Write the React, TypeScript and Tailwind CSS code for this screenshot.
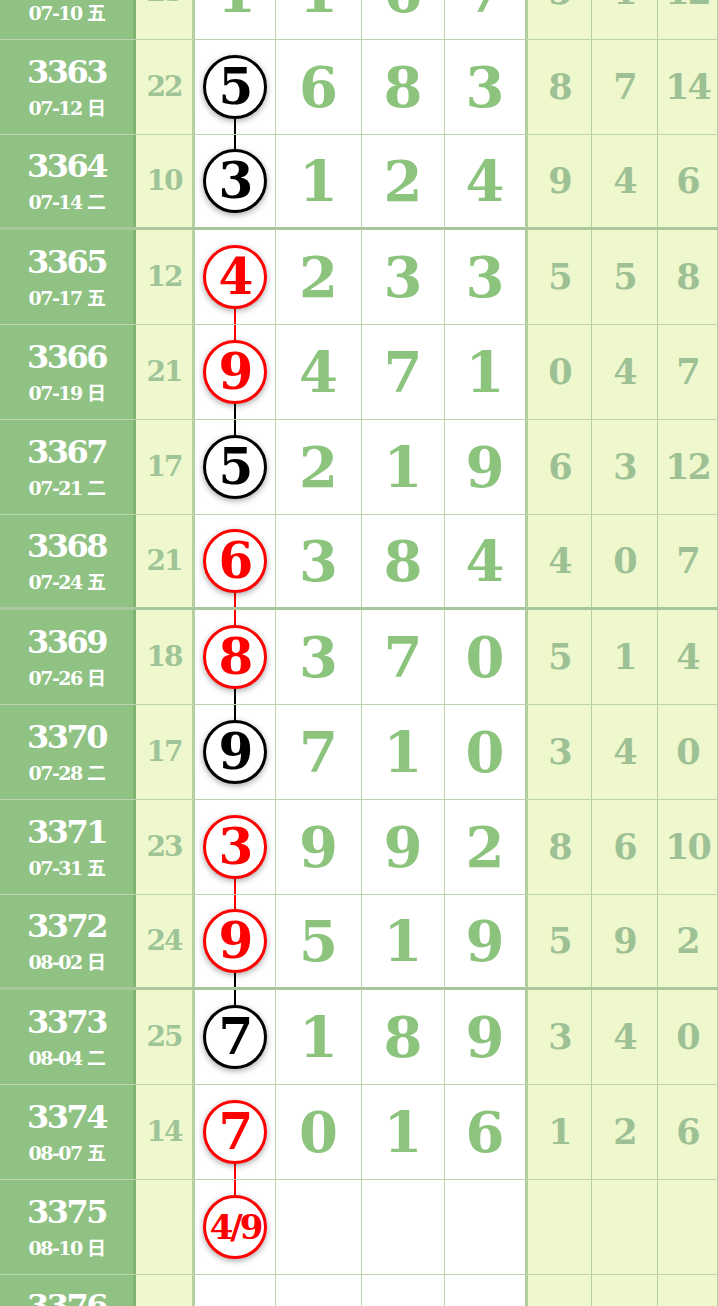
import type { ReactNode } from 'react';

type Ball = 'red' | 'black';

type Row = {
  no: string;
  date: string;
  span: string;
  ball: string;
  color?: Ball;
  // line joining this ball with the one in the row above
  link?: Ball;
  digits: string[];
  tail: string[];
};

const rows: Row[] = [
  { no: '3362', date: '07-10 五', span: '23', ball: '1', digits: ['1', '6', '7'], tail: ['5', '1', '12'] },
  { no: '3363', date: '07-12 日', span: '22', ball: '5', color: 'black', digits: ['6', '8', '3'], tail: ['8', '7', '14'] },
  { no: '3364', date: '07-14 二', span: '10', ball: '3', color: 'black', link: 'black', digits: ['1', '2', '4'], tail: ['9', '4', '6'] },
  { no: '3365', date: '07-17 五', span: '12', ball: '4', color: 'red', digits: ['2', '3', '3'], tail: ['5', '5', '8'] },
  { no: '3366', date: '07-19 日', span: '21', ball: '9', color: 'red', link: 'red', digits: ['4', '7', '1'], tail: ['0', '4', '7'] },
  { no: '3367', date: '07-21 二', span: '17', ball: '5', color: 'black', link: 'black', digits: ['2', '1', '9'], tail: ['6', '3', '12'] },
  { no: '3368', date: '07-24 五', span: '21', ball: '6', color: 'red', digits: ['3', '8', '4'], tail: ['4', '0', '7'] },
  { no: '3369', date: '07-26 日', span: '18', ball: '8', color: 'red', link: 'red', digits: ['3', '7', '0'], tail: ['5', '1', '4'] },
  { no: '3370', date: '07-28 二', span: '17', ball: '9', color: 'black', link: 'black', digits: ['7', '1', '0'], tail: ['3', '4', '0'] },
  { no: '3371', date: '07-31 五', span: '23', ball: '3', color: 'red', digits: ['9', '9', '2'], tail: ['8', '6', '10'] },
  { no: '3372', date: '08-02 日', span: '24', ball: '9', color: 'red', link: 'red', digits: ['5', '1', '9'], tail: ['5', '9', '2'] },
  { no: '3373', date: '08-04 二', span: '25', ball: '7', color: 'black', link: 'black', digits: ['1', '8', '9'], tail: ['3', '4', '0'] },
  { no: '3374', date: '08-07 五', span: '14', ball: '7', color: 'red', digits: ['0', '1', '6'], tail: ['1', '2', '6'] },
  { no: '3375', date: '08-10 日', span: '', ball: '4/9', color: 'red', link: 'red', digits: ['', '', ''], tail: ['', '', ''] },
  { no: '3376', date: '08-12 二', span: '', ball: '', digits: ['', '', ''], tail: ['', '', ''] },
];

const serif = "font-['DejaVu_Serif','Noto_Sans_CJK_SC',serif]";

function Cell({ children, className }: { children?: ReactNode; className?: string }) {
  return (
    <div className={`flex items-center justify-center border-r border-[#bcd4b0] ${className ?? ''}`}>
      {children}
    </div>
  );
}

function BallCell({ row, next }: { row: Row; next?: Row }) {
  const lineColor = (c?: Ball) => (c === 'red' ? 'bg-[#ff0000]' : 'bg-black');
  return (
    <div className="relative flex items-center justify-center border-r border-[#bcd4b0]">
      {row.link && (
        <div className={`absolute left-[39px] top-0 h-1/2 w-[2px] ${lineColor(row.link)}`} />
      )}
      {next?.link && (
        <div className={`absolute left-[39px] bottom-0 h-1/2 w-[2px] ${lineColor(next.link)}`} />
      )}
      {row.color ? (
        <div
          className={`relative z-10 flex h-[64px] w-[64px] items-center justify-center rounded-full border-[3px] bg-white shadow-[0_2px_6px_rgba(0,0,0,0.35)] ${
            row.color === 'red' ? 'border-[#ff0000] text-[#ff0000]' : 'border-black text-black'
          }`}
        >
          <span
            className={`${serif} font-bold leading-none ${
              row.ball.length > 1 ? 'text-[34px] tracking-[-3px]' : 'text-[50px] tracking-[-2px]'
            }`}
          >
            {row.ball}
          </span>
        </div>
      ) : (
        <span className={`${serif} text-[56px] font-bold tracking-[-3px] text-[#8cc47e]`}>{row.ball}</span>
      )}
    </div>
  );
}

export default function App() {
  return (
    <div className="h-[1306px] w-[718px] overflow-hidden bg-white">
      <div className="-mt-[55px]">
        {rows.map((row, i) => {
          const thick = (Number(row.no) - 3360) % 4 === 0;
          return (
            <div
              key={row.no}
              className={`grid h-[95px] grid-cols-[136px_59px_81px_86px_83px_83px_64px_66px_60px] ${
                thick ? 'border-b-[3px] border-[#a9c79c]' : 'border-b border-[#bcd4b0]'
              }`}
            >
              <div className="flex flex-col items-center justify-center gap-[5px] border-r-[3px] border-[#7db470] bg-[#8fc283] text-white">
                <span className={`${serif} text-[32px] font-bold leading-[36px] tracking-[-2.5px]`}>{row.no}</span>
                <span className={`${serif} text-[19px] font-bold leading-[26px] tracking-[-1.5px]`}>{row.date}</span>
              </div>
              <Cell className="border-r-[3px] !border-[#b6d0a2] bg-[#eff8cc]">
                <span className={`${serif} text-[28px] font-bold tracking-[-2px] text-[#9fc498]`}>{row.span}</span>
              </Cell>
              <BallCell row={row} next={rows[i + 1]} />
              {row.digits.map((d, j) => (
                <Cell key={j} className={j === 2 ? 'border-r-[3px] !border-[#b2cd9d]' : ''}>
                  <span className={`${serif} text-[56px] font-bold text-[#8cc47e]`}>{d}</span>
                </Cell>
              ))}
              {row.tail.map((d, j) => (
                <Cell key={j} className="bg-[#eff8cc] !border-[#b6cfa2]">
                  <span className={`${serif} text-[35px] font-bold tracking-[-2px] text-[#9dc195]`}>{d}</span>
                </Cell>
              ))}
            </div>
          );
        })}
      </div>
    </div>
  );
}
